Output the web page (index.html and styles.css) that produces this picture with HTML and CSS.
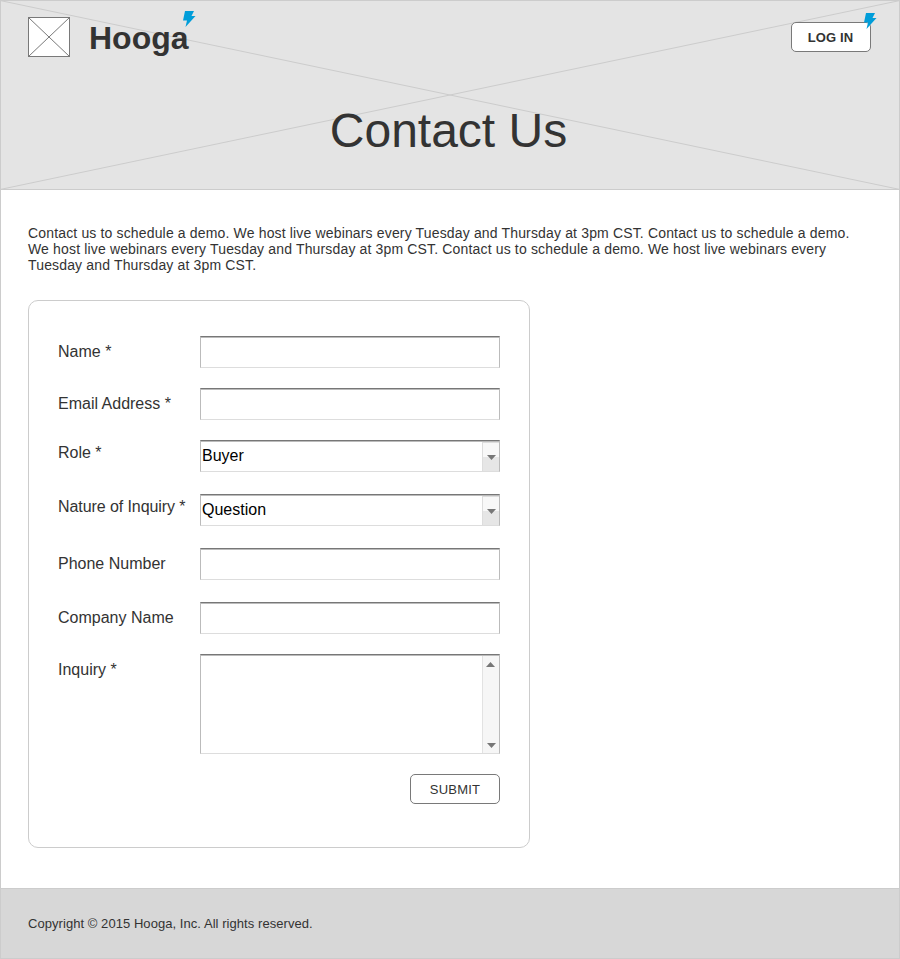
FILE: index.html
```html
<!DOCTYPE html>
<html lang="en">
<head>
<meta charset="utf-8">
<title>Hooga - Contact Us</title>
<link rel="stylesheet" href="styles.css">
</head>
<body>
<div class="page">
  <header class="hero">
    <svg class="hero-cross" viewBox="0 0 900 190" preserveAspectRatio="none"><path d="M0 .5L900 189.500M0 189.500L900 .5"/></svg>
    <div class="topbar">
      <div class="brand">
        <svg class="logo" width="42" height="40" viewBox="0 0 42 40"><rect x=".5" y=".5" width="41" height="39"/><path d="M.5 .5L41.500 39.500M.5 39.500L41.500 .5"/></svg>
        <span class="brand-name">Hooga</span>
        <svg class="bolt bolt-brand" width="13" height="16" viewBox="0 0 13 16"><path d="M2 0H11L8.500 5H12.500L2.500 16L4 9.500H0Z"/></svg>
      </div>
      <div class="login-wrap">
        <button class="btn login" type="button">LOG IN</button>
        <svg class="bolt bolt-login" width="13" height="16" viewBox="0 0 13 16"><path d="M2 0H11L8.500 5H12.500L2.500 16L4 9.500H0Z"/></svg>
      </div>
    </div>
    <h1>Contact Us</h1>
  </header>
  <main>
    <p class="intro">Contact us to schedule a demo. We host live webinars every Tuesday and Thursday at 3pm CST. Contact us to schedule a demo.<br>We host live webinars every Tuesday and Thursday at 3pm CST. Contact us to schedule a demo. We host live webinars every<br>Tuesday and Thursday at 3pm CST.</p>
    <form class="card">
      <div class="row"><label for="name">Name *</label><input class="field" id="name"></div>
      <div class="row"><label for="email">Email Address *</label><input class="field" id="email"></div>
      <div class="row row-select"><label for="role">Role *</label>
        <div class="field select" id="role"><span>Buyer</span><i class="drop"><svg width="9" height="5" viewBox="0 0 9 5"><path d="M0 0H9L4.500 5Z"/></svg></i></div></div>
      <div class="row row-select"><label class="tight" for="nature">Nature of Inquiry *</label>
        <div class="field select" id="nature"><span>Question</span><i class="drop"><svg width="9" height="5" viewBox="0 0 9 5"><path d="M0 0H9L4.500 5Z"/></svg></i></div></div>
      <div class="row row-loose"><label for="phone">Phone Number</label><input class="field" id="phone"></div>
      <div class="row"><label for="company">Company Name</label><input class="field" id="company"></div>
      <div class="row"><label for="inquiry">Inquiry *</label>
        <div class="field area"><textarea id="inquiry"></textarea><div class="scroll"><svg class="up" width="9" height="5" viewBox="0 0 9 5"><path d="M0 5H9L4.500 0Z"/></svg><svg width="9" height="5" viewBox="0 0 9 5"><path d="M0 0H9L4.500 5Z"/></svg></div></div></div>
      <button class="btn submit" type="button">SUBMIT</button>
    </form>
  </main>
  <footer>Copyright © 2015 Hooga, Inc. All rights reserved.</footer>
</div>
</body>
</html>
```
FILE: styles.css
```css
* { box-sizing: border-box; }
body { margin: 0; background: #fff; color: #333; font-family: "Liberation Sans", Arial, sans-serif; }
.page { width: 900px; height: 959px; border: 1px solid #ccc; display: flex; flex-direction: column; }
.hero { position: relative; height: 189px; flex: none; background: #e4e4e4; border-bottom: 1px solid #ccc; }
.hero-cross { position: absolute; left: -1px; top: -1px; width: 900px; height: 190px; fill: none; stroke: #ccc; }
.topbar { position: relative; display: flex; justify-content: space-between; padding: 16px 28px 0 27px; height: 80px; }
.brand { position: relative; display: flex; height: 40px; }
.logo { fill: #fff; stroke: #797979; stroke-width: 1; }
.brand-name { margin-left: 19px; font-size: 32px; line-height: 36px; margin-top: 3px; font-weight: bold; }
.bolt { position: absolute; fill: #009dd9; }
.bolt-brand { left: 155px; top: -6px; }
.login-wrap { position: relative; margin-top: 5px; height: 30px; }
.bolt-login { left: 73px; top: -9px; }
.btn { display: block; height: 30px; padding: 0; background: #fff; border: 1px solid #797979; border-radius: 5px; color: #333; font-family: inherit; font-size: 13px; }
.login { width: 80px; font-weight: bold; padding-right: 1px; letter-spacing: 0.1px; }
h1 { position: relative; margin: 22px 0 0; padding-right: 3px; text-align: center; font-size: 48px; line-height: 55px; font-weight: normal; }
main { flex: 1; padding: 35px 27px 0; }
.intro { margin: 0; font-size: 14px; line-height: 16px; letter-spacing: 0.155px; white-space: nowrap; }
.card { margin-top: 27px; width: 502px; height: 548px; border: 1px solid #ccc; border-radius: 10px; padding: 35px 29px 0; }
.row { display: flex; margin-bottom: 20px; }
.row label { width: 142px; padding-top: 7px; font-size: 16px; line-height: 18px; white-space: nowrap; }
.row-select { margin-bottom: 22px; }
.row-select label { padding-top: 4px; }
.row .tight { letter-spacing: -0.08px; }
.row-loose { margin-bottom: 22px; }
.field { display: block; width: 300px; height: 32px; padding: 0; background: linear-gradient(#bbb, #bbb) top / 100% 1px no-repeat #fff; border: 1px solid; border-color: #777 #bbb #ddd; border-radius: 0; outline: 0; }
.select { display: flex; justify-content: space-between; padding-top: 1px; font-size: 16px; line-height: 27px; color: #000; }
.select span { padding-left: 1px; }
.drop { display: flex; align-items: center; justify-content: center; width: 17px; padding-top: 1px; border: 1px solid #ddd; border-width: 1px 0 0 1px; background: linear-gradient(#f8f8f8 50%, #e6e6e6 50%); }
.drop svg, .scroll svg { fill: #777; }
.area { display: flex; height: 100px; padding-top: 1px; }
textarea { flex: 1; width: 0; padding: 0; border: 0; outline: 0; resize: none; overflow: hidden; background: #fff; }
.scroll { width: 17px; display: flex; flex-direction: column; align-items: center; justify-content: space-between; padding: 6px 0 5px; background: #f6f6f6; border-left: 1px solid #e2e2e2; }
.scroll .up { margin-right: 1px; }
.submit { width: 90px; margin-left: auto; letter-spacing: 0.2px; }
footer { flex: none; height: 70px; padding: 27px 27px 0; background: #d7d7d7; border-top: 1px solid #ccc; font-size: 13px; line-height: 16px; letter-spacing: 0.055px; }
```
